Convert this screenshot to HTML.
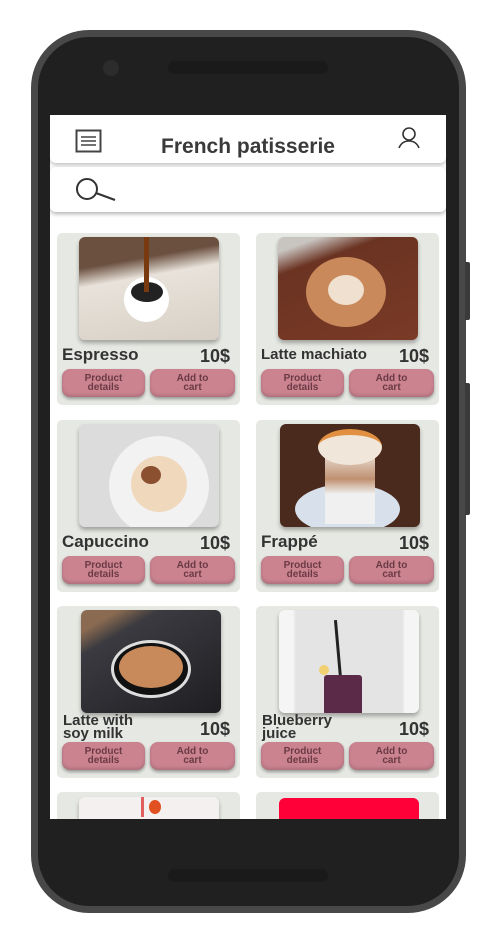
<!DOCTYPE html>
<html><head><meta charset="utf-8"><style>
*{margin:0;padding:0;box-sizing:border-box}
body{width:500px;height:944px;background:#fff;position:relative;overflow:hidden;font-family:"Liberation Sans",sans-serif}
.phone{position:absolute;left:31px;top:30px;width:435px;height:883px;background:#202020;border:7px solid #484848;border-radius:58px}
.btnside{position:absolute;left:465px;width:5px;background:#3a3a3a;border-radius:0 2px 2px 0}
.screen{position:absolute;left:50px;top:115px;width:396px;height:704px;background:#fff;overflow:hidden}
.card{position:absolute;width:183px;height:172px;background:#e6e8e3;border-radius:5px}
.img{position:absolute;left:22px;top:4px;width:140px;height:103px;border-radius:6px;overflow:hidden;box-shadow:0 3px 4px rgba(0,0,0,.3)}
.t{position:absolute;left:5px;top:112px;font-weight:bold;font-size:17px;color:#333}
.t2{position:absolute;left:6px;top:108px;font-weight:bold;font-size:15px;line-height:13px;color:#333}
.p{position:absolute;right:10px;top:113px;font-weight:bold;font-size:18px;color:#333}
.b{position:absolute;top:136px;height:28px;background:#cb8390;border-radius:8px;box-shadow:0 2px 3px rgba(0,0,0,.35),inset 0 -2px 3px rgba(0,0,0,.15);font-weight:bold;font-size:10px;line-height:9px;color:#6a3a44;text-align:center;display:flex;align-items:center;justify-content:center}
.b1{left:5px;width:83px}.b2{left:93px;width:85px}
</style></head><body>
<div class="phone"></div>
<div class="btnside" style="top:262px;height:58px"></div>
<div class="btnside" style="top:383px;height:132px"></div>
<div style="position:absolute;left:168px;top:61px;width:160px;height:13px;border-radius:7px;background:#1a1a1a"></div>
<div style="position:absolute;left:103px;top:60px;width:16px;height:16px;border-radius:50%;background:#2c2c2c"></div>
<div style="position:absolute;left:168px;top:869px;width:160px;height:13px;border-radius:7px;background:#1a1a1a"></div>
<div class="screen">
 <div style="position:absolute;left:0;top:0;width:396px;height:48px;background:#fff;border-radius:0 0 6px 6px;box-shadow:0 2px 4px rgba(0,0,0,.25)"></div>
 <svg style="position:absolute;left:25px;top:14px" width="28" height="24" viewBox="0 0 28 24"><rect x="1.5" y="1.5" width="24" height="21" fill="none" stroke="#444" stroke-width="2"/><path d="M6 8h15M6 12h15M6 16h15" stroke="#444" stroke-width="1.6"/></svg>
 <div style="position:absolute;left:0;width:396px;top:20px;text-align:center;font-weight:bold;font-size:21px;color:#3a3a3a">French patisserie</div>
 <svg style="position:absolute;left:347px;top:11px" width="24" height="24" viewBox="0 0 24 24"><circle cx="12" cy="8" r="6" fill="none" stroke="#333" stroke-width="1.6"/><path d="M2 22c2-5 6-7 10-7s8 2 10 7" fill="none" stroke="#333" stroke-width="1.6"/></svg>
 <div style="position:absolute;left:0;top:52px;width:396px;height:45px;background:#fff;border-radius:6px;box-shadow:0 2px 4px rgba(0,0,0,.3)"></div>
 <svg style="position:absolute;left:25px;top:62px" width="42" height="26" viewBox="0 0 42 26"><circle cx="12" cy="12" r="10" fill="none" stroke="#333" stroke-width="2"/><path d="M21 16l19 7" stroke="#333" stroke-width="2.2"/></svg>

 <div class="card" style="left:7px;top:118px"><div class="img" style="background:linear-gradient(170deg,#6b5040 0 25%,#e8e2da 40%,#d8d0c6);"><div style="position:absolute;left:45px;top:40px;width:45px;height:45px;border-radius:50%;background:#fff"></div><div style="position:absolute;left:52px;top:45px;width:32px;height:20px;border-radius:50%;background:#222"></div><div style="position:absolute;left:65px;top:0;width:5px;height:55px;background:#7a3a10"></div></div><div class="t">Espresso</div><div class="p">10$</div><div class="b b1">Product<br>details</div><div class="b b2">Add to<br>cart</div></div>
 <div class="card" style="left:206px;top:118px"><div class="img" style="background:linear-gradient(160deg,#c8c4c0 0 10%,#6b3322 25%,#7a3a26)"><div style="position:absolute;left:28px;top:20px;width:80px;height:70px;border-radius:50%;background:#c9895a"></div><div style="position:absolute;left:50px;top:38px;width:36px;height:30px;border-radius:50%;background:#f0e0d0"></div></div><div class="t" style="font-size:15px;top:113px">Latte machiato</div><div class="p">10$</div><div class="b b1">Product<br>details</div><div class="b b2">Add to<br>cart</div></div>

 <div class="card" style="left:7px;top:305px"><div class="img" style="background:#dcdcdc"><div style="position:absolute;left:30px;top:12px;width:100px;height:100px;border-radius:50%;background:#f2f2f2"></div><div style="position:absolute;left:52px;top:32px;width:56px;height:56px;border-radius:50%;background:#f0d8bc"></div><div style="position:absolute;left:62px;top:42px;width:20px;height:18px;border-radius:50%;background:#8a5030"></div></div><div class="t">Capuccino</div><div class="p">10$</div><div class="b b1">Product<br>details</div><div class="b b2">Add to<br>cart</div></div>
 <div class="card" style="left:206px;top:305px"><div class="img" style="left:24px;background:#4a2a1c"><div style="position:absolute;left:15px;top:60px;width:105px;height:50px;border-radius:50%;background:#d8e0ec"></div><div style="position:absolute;left:45px;top:25px;width:50px;height:75px;background:linear-gradient(#f0ece6,#c09070 40%,#f0f0f0 60%)"></div><div style="position:absolute;left:38px;top:5px;width:64px;height:36px;border-radius:50%;background:#f0e6da;border-top:6px solid #e09040"></div></div><div class="t">Frappé</div><div class="p">10$</div><div class="b b1">Product<br>details</div><div class="b b2">Add to<br>cart</div></div>

 <div class="card" style="left:7px;top:491px"><div class="img" style="left:24px;background:linear-gradient(150deg,#8a6a50 0 12%,#3a3a40 25%,#1e1e22)"><div style="position:absolute;left:30px;top:30px;width:80px;height:58px;border-radius:50%;background:#111;border:3px solid #ddd"></div><div style="position:absolute;left:38px;top:36px;width:64px;height:42px;border-radius:50%;background:#c88a5a"></div></div><div class="t2">Latte with<br>soy milk</div><div class="p">10$</div><div class="b b1">Product<br>details</div><div class="b b2">Add to<br>cart</div></div>
 <div class="card" style="left:206px;top:491px"><div class="img" style="left:23px;background:linear-gradient(90deg,#f5f5f5 0 10%,#e4e4e4 12%,#e4e4e4 88%,#f5f5f5 90%)"><div style="position:absolute;left:58px;top:10px;width:3px;height:70px;background:#222;transform:rotate(-5deg)"></div><div style="position:absolute;left:45px;top:65px;width:38px;height:40px;border-radius:3px;background:#5a2a48"></div><div style="position:absolute;left:40px;top:55px;width:10px;height:10px;border-radius:50%;background:#f0d070"></div></div><div class="t2">Blueberry<br>juice</div><div class="p">10$</div><div class="b b1">Product<br>details</div><div class="b b2">Add to<br>cart</div></div>

 <div class="card" style="left:7px;top:677px"><div class="img" style="left:22px;top:5px;background:#f4f0f0"><div style="position:absolute;left:62px;top:0;width:3px;height:20px;background:#e06060"></div><div style="position:absolute;left:70px;top:3px;width:12px;height:14px;border-radius:50%;background:#e05020"></div></div></div>
 <div class="card" style="left:206px;top:677px"><div class="img" style="left:23px;top:6px;background:#ff0038;box-shadow:none"></div></div>
</div>
</body></html>
